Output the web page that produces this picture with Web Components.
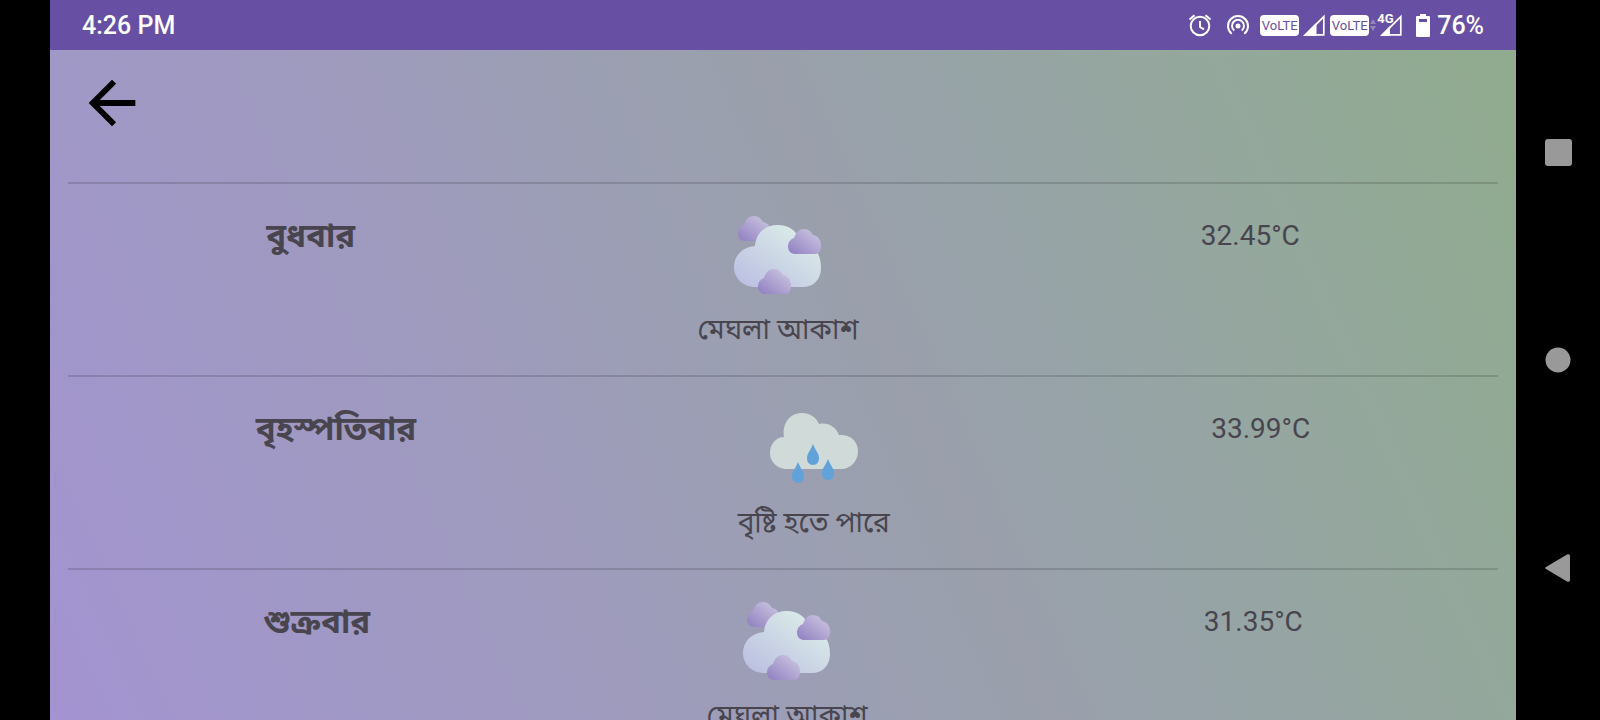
<!DOCTYPE html>
<html lang="bn">
<head>
<meta charset="utf-8">
<meta name="viewport" content="width=device-width, initial-scale=1">
<title>আবহাওয়া</title>
<style>
  html, body { margin: 0; height: 100%; background: #000; }
  body { font-family: Roboto, "Noto Sans Bengali", "Noto Sans", sans-serif; overflow: hidden; }
</style>
</head>
<body>
<phone-shell>
  <status-bar slot="status" time="4:26 PM" battery="76%"></status-bar>
  <forecast-page>
    <forecast-row icon="clouds">
      <span slot="day">বুধবার</span><span slot="sky">মেঘলা আকাশ</span><span slot="temp">32.45°C</span>
    </forecast-row>
    <forecast-row icon="rain">
      <span slot="day">বৃহস্পতিবার</span><span slot="sky">বৃষ্টি হতে পারে</span><span slot="temp">33.99°C</span>
    </forecast-row>
    <forecast-row icon="clouds">
      <span slot="day">শুক্রবার</span><span slot="sky">মেঘলা আকাশ</span><span slot="temp">31.35°C</span>
    </forecast-row>
  </forecast-page>
  <system-nav slot="nav"></system-nav>
</phone-shell>

<script>
function define(name, html, setup) {
  const template = document.createElement('template');
  template.innerHTML = html;
  customElements.define(name, class extends HTMLElement {
    constructor() {
      super();
      this.attachShadow({ mode: 'open' }).append(template.content.cloneNode(true));
    }
    connectedCallback() { if (setup) setup(this, this.shadowRoot); }
  });
}

define('phone-shell', `
  <style>
    :host { display: grid; grid-template-columns: 50px 1fr 84px; height: 100vh; background: #000; }
    .screen { grid-column: 2; display: flex; flex-direction: column; min-width: 0; min-height: 0; }
  </style>
  <div class="screen"><slot name="status"></slot><slot></slot></div>
  <slot name="nav"></slot>
`);

define('volte-badge', `
  <style>
    :host { display: flex; align-items: center; justify-content: center; width: 39px; height: 21px;
      border-radius: 4px; background: #fff; color: #6750a4; font-size: 13px; font-weight: 400; line-height: 21px; }
  </style>
  <span>VoLTE</span>
`);

define('status-bar', `
  <style>
    :host { display: flex; flex: none; align-items: center; justify-content: space-between; height: 50px;
      padding: 0 32px; background: #6750a4; color: #fff; font-size: 25px; font-weight: 500; line-height: 30px; }
    time, .level { padding-top: 2px; }
    .tray { display: flex; align-items: center; }
    svg { display: block; flex: none; }
    .alarm { margin-right: 14px; }
    .hotspot { margin-right: 10px; }
    .signal { margin: 0 5px 0 4px; }
    .data { margin-left: 1px; }
    .mobile { position: relative; margin: 0 14px 0 4px; }
    .mobile span { position: absolute; left: -3px; top: -2px; font-size: 13px; font-weight: 700; line-height: 14px; }
    .battery { margin-right: 7px; }
  </style>
  <time></time>
  <div class="tray">
    <svg class="alarm" width="24" height="24" viewBox="0 0 24 24" fill="none" stroke="#fff" stroke-width="2">
      <circle cx="12" cy="13" r="9.300"/><path d="M12 8v6l4 2.400M1.500 6.500l5-4.300M22.500 6.500l-5-4.300"/></svg>
    <svg class="hotspot" width="24" height="24" viewBox="0 0 24 24" fill="none" stroke="#fff" stroke-width="2" >
      <circle cx="12" cy="13" r="2.500" fill="#fff" stroke="none"/>
      <path d="M8.300 17.500a6 6 0 1 1 7.400 0M5.700 20.800a10 10 0 1 1 12.600 0"/></svg>
    <volte-badge></volte-badge>
    <svg class="signal" width="22" height="22" viewBox="0 0 22 22"><path d="M20.800 2.600V20.800H2.600z" fill="none" stroke="#fff" stroke-width="1.700"/><path d="M0 22L13.500 8.500V22z" fill="#fff"/></svg>
    <volte-badge></volte-badge>
    <svg class="data" width="6" height="12" viewBox="0 0 6 12" fill="#9585bf"><path d="M3 0l3 5H0zM3 12L0 7h6z"/></svg>
    <div class="mobile"><span>4G</span>
      <svg width="22" height="22" viewBox="0 0 22 22"><path d="M20.800 2.600V20.800H2.600z" fill="none" stroke="#fff" stroke-width="1.700"/><path d="M0 22L10 12V22z" fill="#fff"/></svg></div>
    <svg class="battery" width="14" height="23" viewBox="0 0 14 23"><path fill="#fff" fill-rule="evenodd" d="M4 0h6v2h3q1 0 1 1v19q0 1-1 1H1q-1 0-1-1V3q0-1 1-1h3zM3 5v3h8V5z"/></svg>
    <span class="level"></span>
  </div>
`, (host, root) => {
  root.querySelector('time').textContent = host.getAttribute('time');
  root.querySelector('.level').textContent = host.getAttribute('battery');
});

define('forecast-page', `
  <style>
    :host { display: block; flex: 1; min-height: 0; overflow: hidden; box-sizing: border-box; padding: 18px;
      background: linear-gradient(66deg, #a393d1 0%, #a098c6 17%, #9f9abf 30%, #9b9fb2 47%, #9a9fab 57%, #97a3a8 66%, #94a89b 83%, #90ab8e 100%); }
    header { padding: 0 9px 44px; }
    button { display: block; width: 70px; height: 70px; padding: 0; border: 0; background: none; color: #000; }
    svg { display: block; }
  </style>
  <header><button type="button" aria-label="ফিরে যান">
    <svg width="70" height="70" viewBox="0 0 24 24" fill="currentColor"><path d="M20 11H7.830l5.590-5.590L12 4l-8 8 8 8 1.410-1.410L7.830 13H20z"/></svg>
  </button></header>
  <div role="list"><slot></slot></div>
`);

define('cloud-icon', `
  <style>:host, svg { display: block; }</style>
  <svg width="88" height="88" viewBox="0 0 88 88">
    <defs>
      <linearGradient id="big" x1="0" y1="1" x2="1" y2="0"><stop offset=".1" stop-color="#bdc2e2"/><stop offset=".8" stop-color="#d9e9e8"/></linearGradient>
      <linearGradient id="small" x1="0" y1="1" x2="1" y2="0"><stop offset=".1" stop-color="#9486c3"/><stop offset=".9" stop-color="#cbc4e0"/></linearGradient>
      <path id="puff" d="M7 25C2 25 0 21 0 17.500 0 13 3 10 6 9 8 3 11 0 16 0c5 0 7 3 9 6C30 7 33 11 33 16c0 6-2 9-6 9z"/>
    </defs>
    <use href="#puff" x="4" y="5" fill="url(#small)"/>
    <path fill="url(#big)" d="M21 76C9 76 0 67 0 56c0-11 8-20 21-21C22 22 31 14 44 14c10 0 18 5 21 14 14 3 22 14 22 29 0 12-8 19-18 19z"/>
    <use href="#puff" x="54" y="18" fill="url(#small)"/>
    <use href="#puff" x="24" y="58" fill="url(#small)"/>
  </svg>
`);

define('rain-icon', `
  <style>:host, svg { display: block; }</style>
  <svg width="88" height="88" viewBox="0 0 88 88">
    <path fill="#d0dad9" d="M15 65C6 64 0 57 0 49c0-9 6-16 14-16C12 19 20 9 32 9c8 0 14 4 17 11 9-2 17 3 20 11 11-1 19 6 19 16 0 10-7 18-17 18z"/>
    <path id="drop" fill="#62a2da" d="M43 40c2 6 6 9 6 14 0 4-2 7-6 7s-6-3-6-7c0-5 4-8 6-14z"/>
    <use href="#drop" x="-15" y="18"/><use href="#drop" x="15" y="15"/>
  </svg>
`);

define('forecast-row', `
  <style>
    :host { display: flex; justify-content: space-around; align-items: flex-start; padding: 27px 27px 20px;
      border-top: 2px solid rgba(0, 0, 0, .14); color: #49454f; font-size: 28px; line-height: 50px; }
    .day { font-size: 33px; font-weight: 700; }
    .sky { display: flex; flex-direction: column; align-items: center; gap: 6px; }
  </style>
  <div class="day"><slot name="day"></slot></div>
  <div class="sky"><slot name="sky"></slot></div>
  <div class="temp"><slot name="temp"></slot></div>
`, (host, root) => {
  host.setAttribute('role', 'listitem');
  const icon = document.createElement(host.getAttribute('icon') === 'rain' ? 'rain-icon' : 'cloud-icon');
  icon.setAttribute('aria-hidden', 'true');
  root.querySelector('.sky').prepend(icon);
});

define('system-nav', `
  <style>
    :host { display: flex; flex-direction: column; box-sizing: border-box; padding: 48px 0; background: #000; }
    button { flex: 1; display: grid; place-items: center; padding: 0; border: 0; background: none; color: #999; }
  </style>
  <button type="button" aria-label="Overview"><svg width="27" height="27"><rect width="27" height="27" rx="3" fill="currentColor"/></svg></button>
  <button type="button" aria-label="Home"><svg width="26" height="26"><circle cx="13" cy="13" r="12.500" fill="currentColor"/></svg></button>
  <button type="button" aria-label="Back"><svg width="26" height="28" viewBox="0 0 26 28"><path fill="currentColor" d="M1 13L22 .500Q25 -.500 25 2V26q0 2.500-3 1.500L1 15q-1.500-1 0-2z"/></svg></button>
`);
</script>
</body>
</html>
